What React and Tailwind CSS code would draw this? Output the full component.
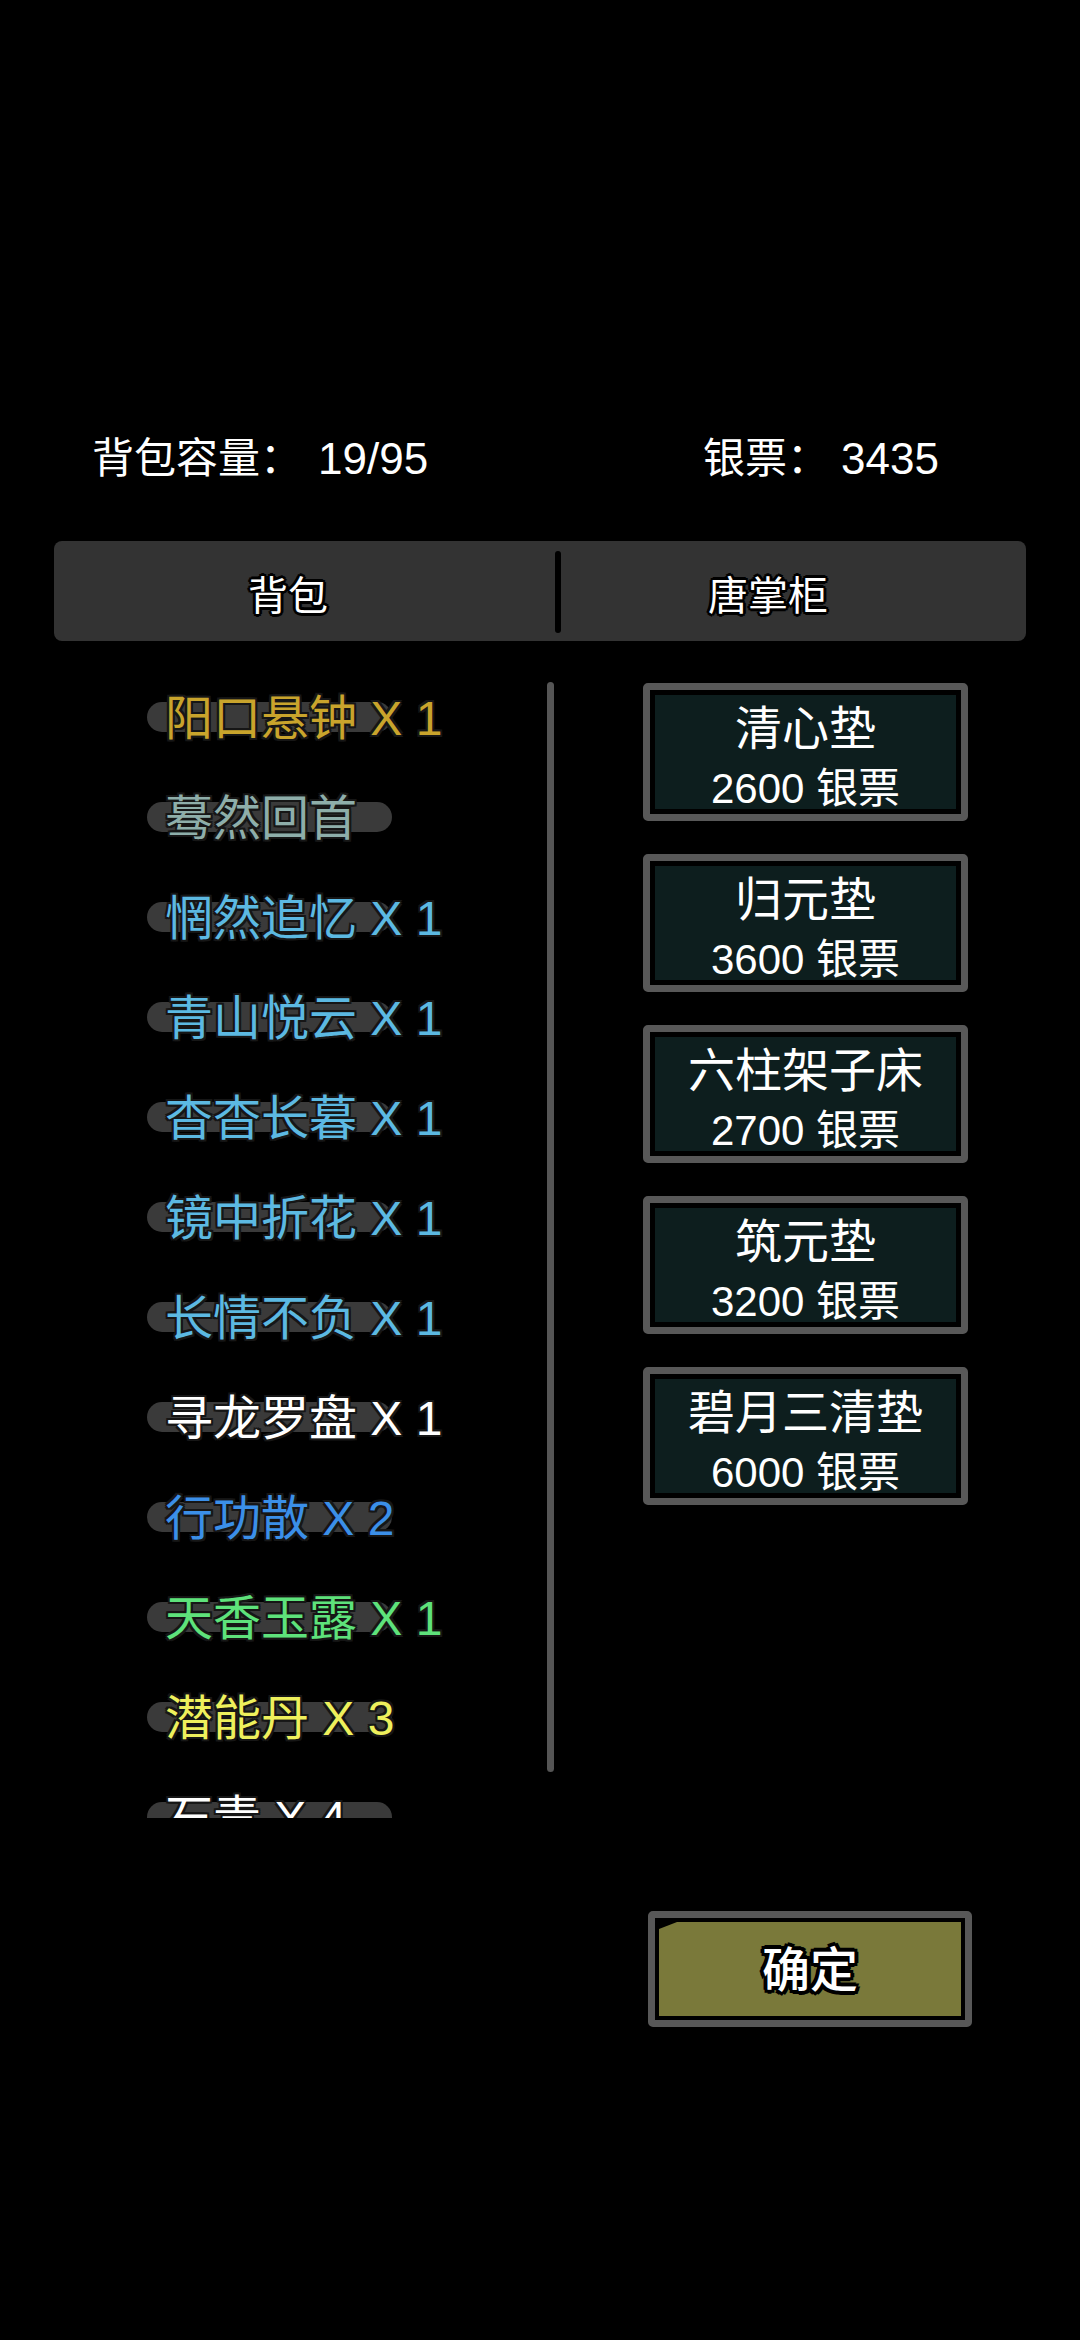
import React from "react";

const items = [
  { name: "阳口悬钟 X 1", color: "text-[#c9a42c]" },
  { name: "蓦然回首", color: "text-[#8eaeaa]" },
  { name: "惘然追忆 X 1", color: "text-[#5cb9e2]" },
  { name: "青山悦云 X 1", color: "text-[#5cb9e2]" },
  { name: "杳杳长暮 X 1", color: "text-[#5cb9e2]" },
  { name: "镜中折花 X 1", color: "text-[#5cb9e2]" },
  { name: "长情不负 X 1", color: "text-[#5cb9e2]" },
  { name: "寻龙罗盘 X 1", color: "text-white" },
  { name: "行功散 X 2", color: "text-[#3b8fe8]" },
  { name: "天香玉露 X 1", color: "text-[#5ee27b]" },
  { name: "潜能丹 X 3", color: "text-[#eef05c]" },
  { name: "石青 X 4", color: "text-white" },
];

const goods = [
  { name: "清心垫", price: "2600 银票" },
  { name: "归元垫", price: "3600 银票" },
  { name: "六柱架子床", price: "2700 银票" },
  { name: "筑元垫", price: "3200 银票" },
  { name: "碧月三清垫", price: "6000 银票" },
];

const font = "font-['Liberation_Sans','Noto_Sans_CJK_SC',sans-serif]";

export default function App() {
  return (
    <div className={`w-[1080px] h-[2340px] bg-black overflow-hidden ${font}`}>
      {/* header */}
      <div className="pt-[434px] h-[484px] flex items-center text-white text-[42px] leading-[50px]">
        <div className="ml-[92px] w-[611px] flex">
          <span>背包容量：</span>
          <span className="ml-[16px] text-[44px]">19/95</span>
        </div>
        <div className="flex">
          <span>银票：</span>
          <span className="ml-[12px] text-[44px]">3435</span>
        </div>
      </div>

      {/* tabs */}
      <div className="mt-[57px] mx-[54px] h-[100px] rounded-[8px] bg-[#333333] flex items-center text-white text-[40px] leading-[50px] [text-shadow:3px_0_0_#000,-3px_0_0_#000,0_3px_0_#000,0_-3px_0_#000,2px_2px_0_#000,-2px_-2px_0_#000,2px_-2px_0_#000,-2px_2px_0_#000]">
        <div className="w-[468px] text-center pt-[9px]">背包</div>
        <div className="ml-[33px] w-[6px] h-[82px] mt-[2px] rounded-full bg-black" />
        <div className="w-[414px] text-center pt-[9px]">唐掌柜</div>
      </div>

      {/* content */}
      <div className="mt-[26px] flex">
        <div className="relative w-[560px] h-[1151px] overflow-hidden">
          {items.map((it, i) => (
            <div key={i} className="relative h-[100px] flex items-center">
              <div className="absolute left-[147px] top-[35px] w-[245px] h-[30px] rounded-full bg-[#3a3a3a]" />
              <span
                className={`relative ml-[165px] pt-[4px] text-[48px] leading-[60px] whitespace-pre ${it.color} [text-shadow:2px_0_0_#161616,-2px_0_0_#161616,0_2px_0_#161616,0_-2px_0_#161616,2px_2px_0_#161616,-2px_-2px_0_#161616,2px_-2px_0_#161616,-2px_2px_0_#161616]`}
              >
                {it.name}
              </span>
            </div>
          ))}
          <div className="absolute left-[547px] top-[15px] w-[7px] h-[1090px] rounded-full bg-[#555555]" />
        </div>

        <div className="ml-[83px] pt-[16px] flex flex-col gap-[33px]">
          {goods.map((g, i) => (
            <div key={i} className="w-[325px] h-[138px] border-[7px] border-[#585858] rounded-[5px] bg-black p-[5px]">
              <div className="h-full bg-[#0d1e1e] flex flex-col items-center text-white">
                <div className="pt-[9px] text-[47px] leading-[50px]">{g.name}</div>
                <div className="mt-[10px] text-[42px] leading-[50px]">{g.price}</div>
              </div>
            </div>
          ))}
        </div>
      </div>

      {/* confirm */}
      <div className="mt-[93px] ml-[648px] w-[324px] h-[116px] border-[7px] border-[#585858] rounded-[5px] bg-black p-[4px]">
        <div className="h-full bg-[#7a793a] [clip-path:polygon(0_7px,18px_0,100%_0,100%_100%,0_100%)] flex items-center justify-center">
          <span className="pt-[3px] text-white text-[48px] leading-[54px] font-medium [text-shadow:4px_0_0_#000,-4px_0_0_#000,0_4px_0_#000,0_-4px_0_#000,3px_3px_0_#000,-3px_-3px_0_#000,3px_-3px_0_#000,-3px_3px_0_#000]">
            确定
          </span>
        </div>
      </div>
    </div>
  );
}
